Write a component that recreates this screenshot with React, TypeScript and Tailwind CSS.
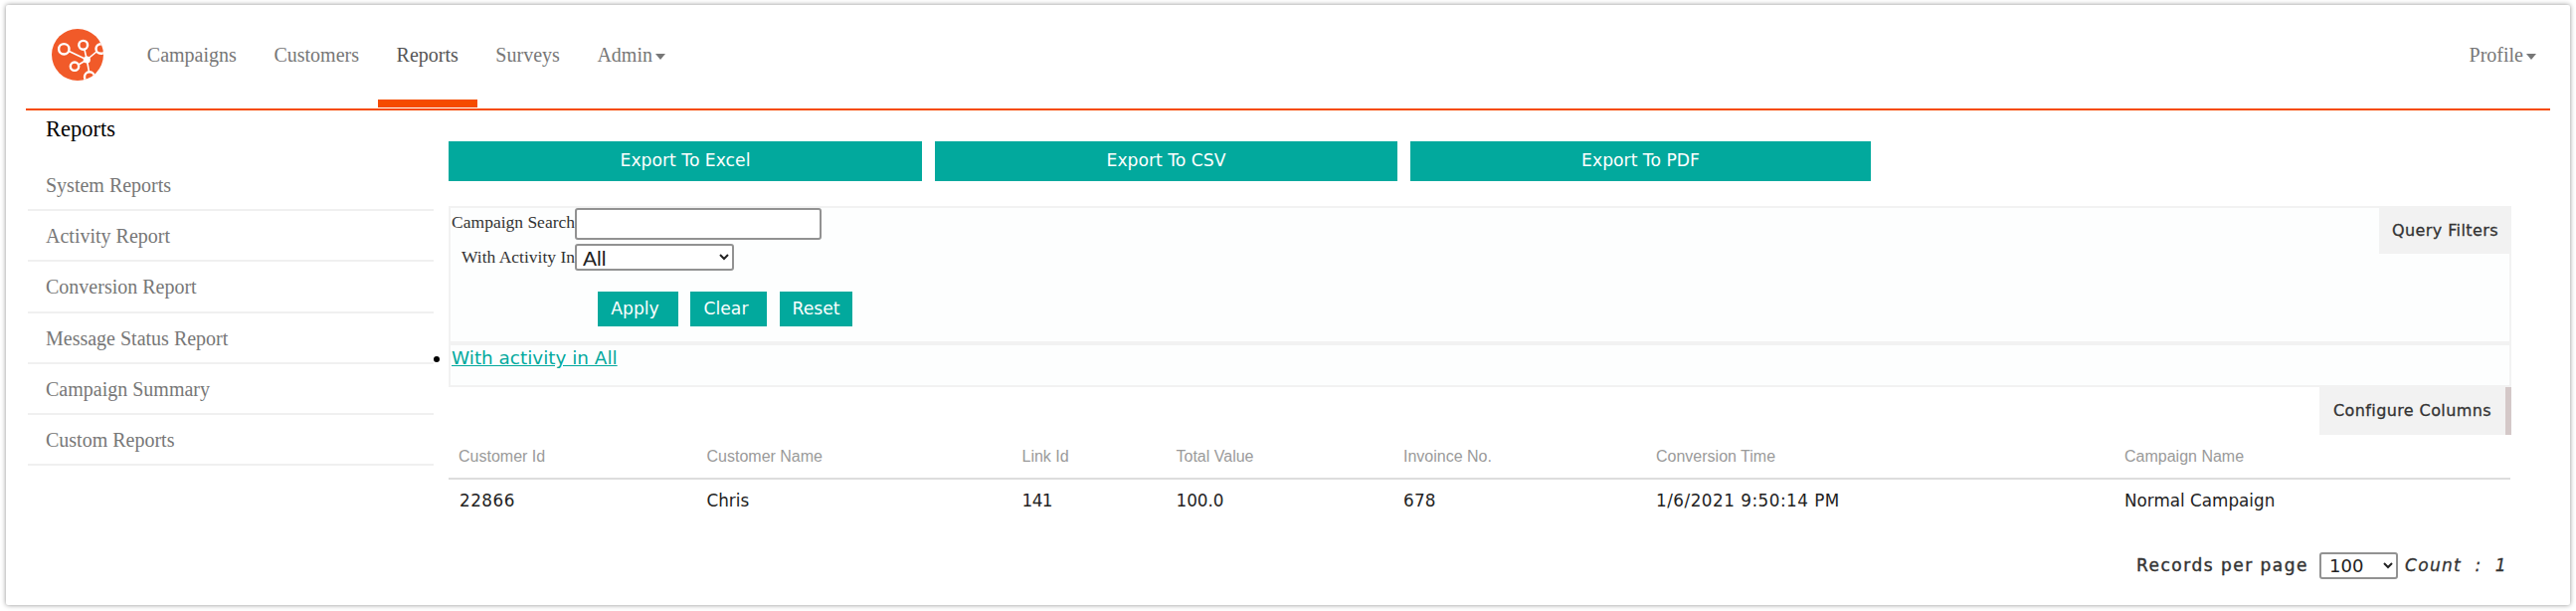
import { ReactNode } from "react";

const navItems = ["Campaigns", "Customers", "Reports", "Surveys"];

const sideItems = [
  "System Reports",
  "Activity Report",
  "Conversion Report",
  "Message Status Report",
  "Campaign Summary",
  "Custom Reports",
];

const columns = [
  { label: "Customer Id", value: "22866", width: "w-[249.5px]", cell: "tracking-[0.5px] pl-[11px]" },
  { label: "Customer Name", value: "Chris", width: "w-[317px]", cell: "" },
  { label: "Link Id", value: "141", width: "w-[155px]", cell: "tracking-[-0.5px]" },
  { label: "Total Value", value: "100.0", width: "w-[228.5px]", cell: "" },
  { label: "Invoince No.", value: "678", width: "w-[254px]", cell: "tracking-[0.2px]" },
  { label: "Conversion Time", value: "1/6/2021 9:50:14 PM", width: "w-[471px]", cell: "tracking-[0.5px]" },
  { label: "Campaign Name", value: "Normal Campaign", width: "w-[398px]", cell: "" },
];

function Caret() {
  return (
    <span className="inline-block ml-[3px] mt-[3px] w-0 h-0 border-x-[5px] border-t-[6px] border-x-transparent border-t-[#777]" />
  );
}

function Logo() {
  return (
    <svg width="52" height="52" viewBox="0 0 52 52" className="shrink-0">
      <defs>
        <clipPath id="logo-clip">
          <circle cx="26" cy="26" r="26" />
        </clipPath>
      </defs>
      <circle cx="26" cy="26" r="26" fill="#f15a29" />
      <g clipPath="url(#logo-clip)" stroke="#fff" fill="none">
        <g strokeWidth="1.6">
          <path d="M35.3 31 L17.5 22.5" />
          <path d="M35.3 31 L33 21" />
          <path d="M35.3 31 L27 36" />
          <path d="M35.3 31 L45 23" />
          <path d="M35.3 31 L37.5 43" />
        </g>
        <g strokeWidth="2.4">
          <circle cx="12.3" cy="20.3" r="5.2" />
          <circle cx="31.7" cy="16.3" r="4.4" />
          <circle cx="23" cy="37.7" r="4.2" />
          <circle cx="49.3" cy="20" r="4.8" />
          <circle cx="38" cy="48.3" r="5" />
        </g>
        <circle cx="35.3" cy="31" r="3.6" fill="#fff" stroke="none" />
      </g>
    </svg>
  );
}

function TealButton({ className, children }: { className: string; children: ReactNode }) {
  return (
    <button className={`${className} flex items-center justify-center bg-[#02a99d] text-white font-['DejaVu_Sans',sans-serif] text-[17.2px]`}>
      {children}
    </button>
  );
}

export default function App() {
  return (
    <div className="w-[2590px] h-[614px] bg-white pt-[5px] pl-[6px] overflow-hidden">
      <div className="w-[2578px] h-[603px] bg-white rounded-[2px] shadow-[0_0_5px_rgba(0,0,0,0.45)] px-[20px] font-['Liberation_Serif',serif]">
        {/* Top nav */}
        <header className="flex items-start justify-between h-[106px] border-b-2 border-[#f54b00] text-[20px] text-[#777]">
          <div className="flex items-start">
            <div className="ml-[26px] mt-[24px] mr-[25px]">
              <Logo />
            </div>
            {navItems.map((item) => (
              <a
                key={item}
                className={`h-[103px] pt-[5px] px-[18.8px] flex items-center border-b-[8px] ${
                  item === "Reports" ? "border-[#f54b00] text-[#555]" : "border-transparent"
                }`}
              >
                {item}
              </a>
            ))}
            <a className="h-[103px] pt-[5px] px-[18.8px] flex items-center border-b-[8px] border-transparent">
              Admin
              <Caret />
            </a>
          </div>
          <a className="h-[103px] pt-[5px] pr-[14px] flex items-center border-b-[8px] border-transparent">
            Profile
            <Caret />
          </a>
        </header>

        <div className="flex">
          {/* Sidebar */}
          <aside className="w-[408px] ml-[2px] shrink-0">
            <h2 className="h-[38px] mb-[12px] pl-[18px] flex items-center text-[22.5px] text-black">Reports</h2>
            {sideItems.map((item) => (
              <div
                key={item}
                className="h-[51.2px] pl-[18px] pt-[1px] flex items-center border-b-2 border-[#f0f0f0] text-[20px] text-[#777]"
              >
                {item}
              </div>
            ))}
          </aside>

          {/* Main */}
          <main className="w-[2074px] ml-[15px] pt-[31px]">
            <div className="flex gap-[13px]">
              <TealButton className="w-[476px] h-[40px]">Export To Excel</TealButton>
              <TealButton className="w-[465px] h-[40px]">Export To CSV</TealButton>
              <TealButton className="w-[463px] h-[40px]">Export To PDF</TealButton>
            </div>

            {/* Query filters */}
            <section className="relative mt-[25px] border-2 border-[#f2f2f2] bg-[#fdfefe]">
              <div className="absolute top-0 -right-[2px] w-[133px] h-[46px] flex items-center justify-center bg-[#f2f2f2] font-['DejaVu_Sans',sans-serif] text-[16px] tracking-[0.4px] text-[#333] [-webkit-text-stroke:0.3px_#333]">
                Query Filters
              </div>
              <div className="grid grid-cols-[125px_auto] justify-start gap-y-[4px] text-[17.5px] text-[#333]">
                <label className="text-right pb-[4px] flex items-center justify-end whitespace-nowrap">Campaign Search</label>
                <input className="w-[248px] h-[32px] bg-white border-2 border-[#929292] rounded-[3px]" />
                <label className="text-right pb-[3px] flex items-center justify-end whitespace-nowrap">With Activity In</label>
                <select className="w-[160px] h-[27px] pl-[2px] bg-white border-2 border-[#929292] rounded-[3px] font-['Liberation_Sans',sans-serif] text-[21px] text-[#222]">
                  <option>All</option>
                </select>
              </div>
              <div className="flex mt-[19px] mb-[15px] ml-[148px]">
                <TealButton className="w-[81px] h-[35px] mr-[12px] pr-[6px]">Apply</TealButton>
                <TealButton className="w-[77px] h-[35px] mr-[13px] pr-[5px]">Clear</TealButton>
                <TealButton className="w-[73px] h-[35px]">Reset</TealButton>
              </div>
            </section>
            <section className="h-[44px] border-2 border-[#f2f2f2] bg-[#fdfefe]">
              <ul className="list-disc list-outside text-black font-['DejaVu_Sans',sans-serif] text-[18.4px] leading-[26px]">
                <li className="ml-[1px]">
                  <a className="text-[#02a99d] underline">With activity in All</a>
                </li>
              </ul>
            </section>

            {/* Table */}
            <div className="flex justify-end">
              <div className="w-[193px] h-[48px] flex items-center justify-center bg-[#f2f2f2] border-r-[6px] border-[#d4c8c8] font-['DejaVu_Sans',sans-serif] text-[16px] tracking-[0.4px] text-[#333] [-webkit-text-stroke:0.3px_#333]">
                Configure Columns
              </div>
            </div>
            <table className="table-fixed w-[2073px] border-collapse">
              <thead>
                <tr className="border-b-2 border-[#dddddd]">
                  {columns.map((col) => (
                    <th
                      key={col.label}
                      className={`${col.width} h-[44px] px-[10px] text-left font-normal font-['Liberation_Sans',sans-serif] text-[16px] text-[#9a9a9a]`}
                    >
                      {col.label}
                    </th>
                  ))}
                </tr>
              </thead>
              <tbody>
                <tr>
                  {columns.map((col) => (
                    <td
                      key={col.label}
                      className={`h-[44px] px-[10px] font-['DejaVu_Sans',sans-serif] text-[16.8px] text-[#222] ${col.cell}`}
                    >
                      {col.value}
                    </td>
                  ))}
                </tr>
              </tbody>
            </table>

            {/* Footer */}
            <div className="flex items-center justify-end mt-[30px] pr-[4px] font-['DejaVu_Sans',sans-serif] text-[#333]">
              <span className="text-[17px] tracking-[1.5px] mr-[11px] [-webkit-text-stroke:0.4px_#333]">Records per page</span>
              <select className="w-[79px] h-[27px] mr-[7px] pl-[4px] bg-white border-2 border-[#929292] rounded-[3px] text-[18px] text-[#222]">
                <option>100</option>
              </select>
              <span className="italic text-[17px] tracking-[1.3px] whitespace-pre [-webkit-text-stroke:0.3px_#333]">Count  :  1</span>
            </div>
          </main>
        </div>
      </div>
    </div>
  );
}
